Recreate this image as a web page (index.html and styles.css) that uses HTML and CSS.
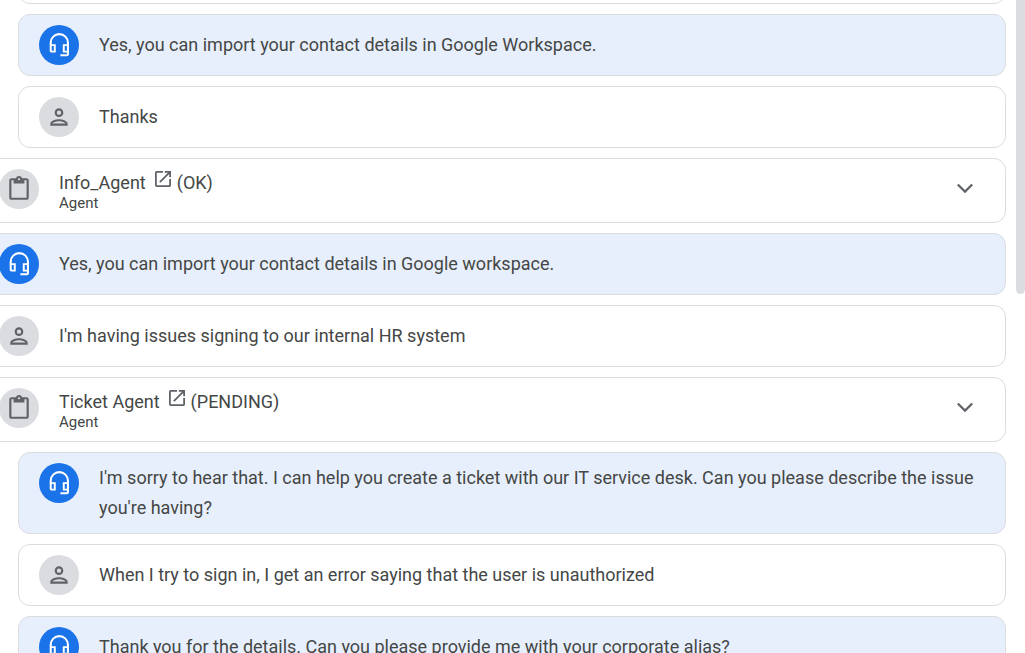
FILE: index.html
```html
<!DOCTYPE html>
<html lang="en">
<head>
    <meta charset="UTF-8">
    <meta name="viewport" content="width=device-width, initial-scale=1.0">
    <title>Conversation</title>
    <link rel="stylesheet" href="styles.css">
</head>
<body>
    <!-- Shared icons -->
    <svg class="sprite" aria-hidden="true">
        <symbol id="headset" viewBox="0 0 24 24">
            <path d="M12.300 1a8.900 8.900 0 0 0-8.900 8.900v7.100a2 2 0 0 0 2 2h3.600v-7.800H5.300V9.900a7 7 0 0 1 14 0v1.300h-3.800V19h3.800v1.600h-6v1.800h5.900a2 2 0 0 0 2-2V9.900A8.900 8.900 0 0 0 12.300 1zM5.300 13h1.900v4.200H5.300V13zm14 4.200h-2V13h2v4.200z"/>
        </symbol>
        <symbol id="person" viewBox="0 0 24 24">
            <path d="M12 6a2 2 0 1 1 0 4 2 2 0 0 1 0-4m0 10c2.700 0 5.800 1.290 6 2H6c.23-.72 3.310-2 6-2m0-12C9.790 4 8 5.790 8 8s1.790 4 4 4 4-1.790 4-4-1.790-4-4-4zm0 10c-2.670 0-8 1.340-8 4v2h16v-2c0-2.660-5.330-4-8-4z"/>
        </symbol>
        <symbol id="clipboard" viewBox="0 0 24 24">
            <path d="M19 2h-4.180C14.400.84 13.300 0 12 0S9.600.84 9.180 2H5c-1.100 0-2 .9-2 2v16c0 1.100.9 2 2 2h14c1.100 0 2-.9 2-2V4c0-1.100-.9-2-2-2zm-7 0c.55 0 1 .45 1 1s-.45 1-1 1-1-.45-1-1 .45-1 1-1zm7 18H5V4h2v3h10V4h2v16z"/>
        </symbol>
        <symbol id="open" viewBox="3 3 18 18">
            <path d="M19 19H5V5h7V3H5a2 2 0 0 0-2 2v14a2 2 0 0 0 2 2h14c1.100 0 2-.9 2-2v-7h-2v7zM14 3v2h3.590l-9.830 9.830 1.410 1.410L19 6.410V10h2V3h-7z"/>
        </symbol>
        <symbol id="chevron" viewBox="0 0 24 24">
            <path d="M7.200 8 12 12.800 16.800 8 18 9.200l-6 6-6-6L7.200 8z"/>
        </symbol>
    </svg>

    <main class="conversation">
        <div class="nested">
            <div class="card">
                <span class="avatar"><svg class="icon"><use href="#person"/></svg></span>
            </div>
            <div class="card reply">
                <span class="avatar"><svg class="icon"><use href="#headset"/></svg></span>
                <p class="message">Yes, you can import your contact details in Google Workspace.</p>
            </div>
            <div class="card">
                <span class="avatar"><svg class="icon"><use href="#person"/></svg></span>
                <p class="message">Thanks</p>
            </div>
        </div>

        <div class="card agent">
            <span class="avatar"><svg class="icon"><use href="#clipboard"/></svg></span>
            <div class="details">
                <div class="title">
                    <span>Info_Agent</span>
                    <a class="open-link" href="#" aria-label="Open Info_Agent"><svg class="icon"><use href="#open"/></svg></a>
                    <span>(OK)</span>
                </div>
                <div class="subtitle">Agent</div>
            </div>
            <button class="toggle" type="button" aria-label="Toggle Info_Agent"><svg class="icon"><use href="#chevron"/></svg></button>
        </div>

        <div class="card reply">
            <span class="avatar"><svg class="icon"><use href="#headset"/></svg></span>
            <p class="message">Yes, you can import your contact details in Google workspace.</p>
        </div>
        <div class="card">
            <span class="avatar"><svg class="icon"><use href="#person"/></svg></span>
            <p class="message">I'm having issues signing to our internal HR system</p>
        </div>

        <div class="card agent">
            <span class="avatar"><svg class="icon"><use href="#clipboard"/></svg></span>
            <div class="details">
                <div class="title">
                    <span>Ticket Agent</span>
                    <a class="open-link" href="#" aria-label="Open Ticket Agent"><svg class="icon"><use href="#open"/></svg></a>
                    <span>(PENDING)</span>
                </div>
                <div class="subtitle">Agent</div>
            </div>
            <button class="toggle" type="button" aria-label="Toggle Ticket Agent"><svg class="icon"><use href="#chevron"/></svg></button>
        </div>

        <div class="nested">
            <div class="card reply">
                <span class="avatar"><svg class="icon"><use href="#headset"/></svg></span>
                <p class="message">I'm sorry to hear that. I can help you create a ticket with our IT service desk. Can you please describe the issue you're having?</p>
            </div>
            <div class="card">
                <span class="avatar"><svg class="icon"><use href="#person"/></svg></span>
                <p class="message">When I try to sign in, I get an error saying that the user is unauthorized</p>
            </div>
            <div class="card reply">
                <span class="avatar"><svg class="icon"><use href="#headset"/></svg></span>
                <p class="message">Thank you for the details. Can you please provide me with your corporate alias?</p>
            </div>
        </div>
    </main>

    <div class="scroll-thumb"></div>
</body>
</html>
```
FILE: styles.css
```css
* {
    box-sizing: border-box;
}

body {
    margin: 0;
    height: 100vh;
    overflow: hidden;
    background: #ffffff;
    color: #444746;
    font-family: Roboto, Arial, sans-serif;
    font-size: 18px;
    line-height: 30px;
}

.sprite {
    display: none;
}

/* The list is scrolled down and to the right of its own start */
.conversation {
    display: flex;
    flex-direction: column;
    gap: 10px;
    margin: -58px 19px 0 -22px;
}

.nested {
    display: flex;
    flex-direction: column;
    gap: 10px;
    padding-left: 40px;
}

.card {
    display: flex;
    align-items: flex-start;
    gap: 20px;
    min-height: 62px;
    padding: 10px 20px;
    background: #ffffff;
    border: 1px solid #dadce0;
    border-radius: 12px;
}

.card.reply {
    background: #e8effc;
}

.card.agent {
    min-height: 65px;
}

.avatar {
    display: flex;
    flex: none;
    align-items: center;
    justify-content: center;
    width: 40px;
    height: 40px;
    border-radius: 50%;
    background: #dadce0;
    color: #5f6368;
}

.reply .avatar {
    background: #1a73e8;
    color: #ffffff;
}

.icon {
    display: block;
    width: 26px;
    height: 26px;
    fill: currentColor;
}

.message {
    flex: 1;
    align-self: center;
    margin: 0;
}

.details {
    flex: 1;
    padding-top: 2px;
}

.title {
    display: flex;
    line-height: 24px;
}

.subtitle {
    font-size: 15px;
    line-height: 16px;
}

.open-link {
    margin: 0 6px 0 9px;
    color: #5f6368;
}

.open-link .icon {
    width: 16px;
    height: 16px;
}

.toggle {
    display: flex;
    align-items: center;
    justify-content: center;
    width: 40px;
    height: 40px;
    padding: 0;
    border: none;
    background: none;
    color: #5f6368;
    cursor: pointer;
}

.toggle .icon {
    width: 32px;
    height: 32px;
}

.scroll-thumb {
    position: fixed;
    top: 0;
    right: 0;
    width: 9px;
    height: 45vh;
    border-radius: 0 0 5px 5px;
    background: #dadce0;
}
```
